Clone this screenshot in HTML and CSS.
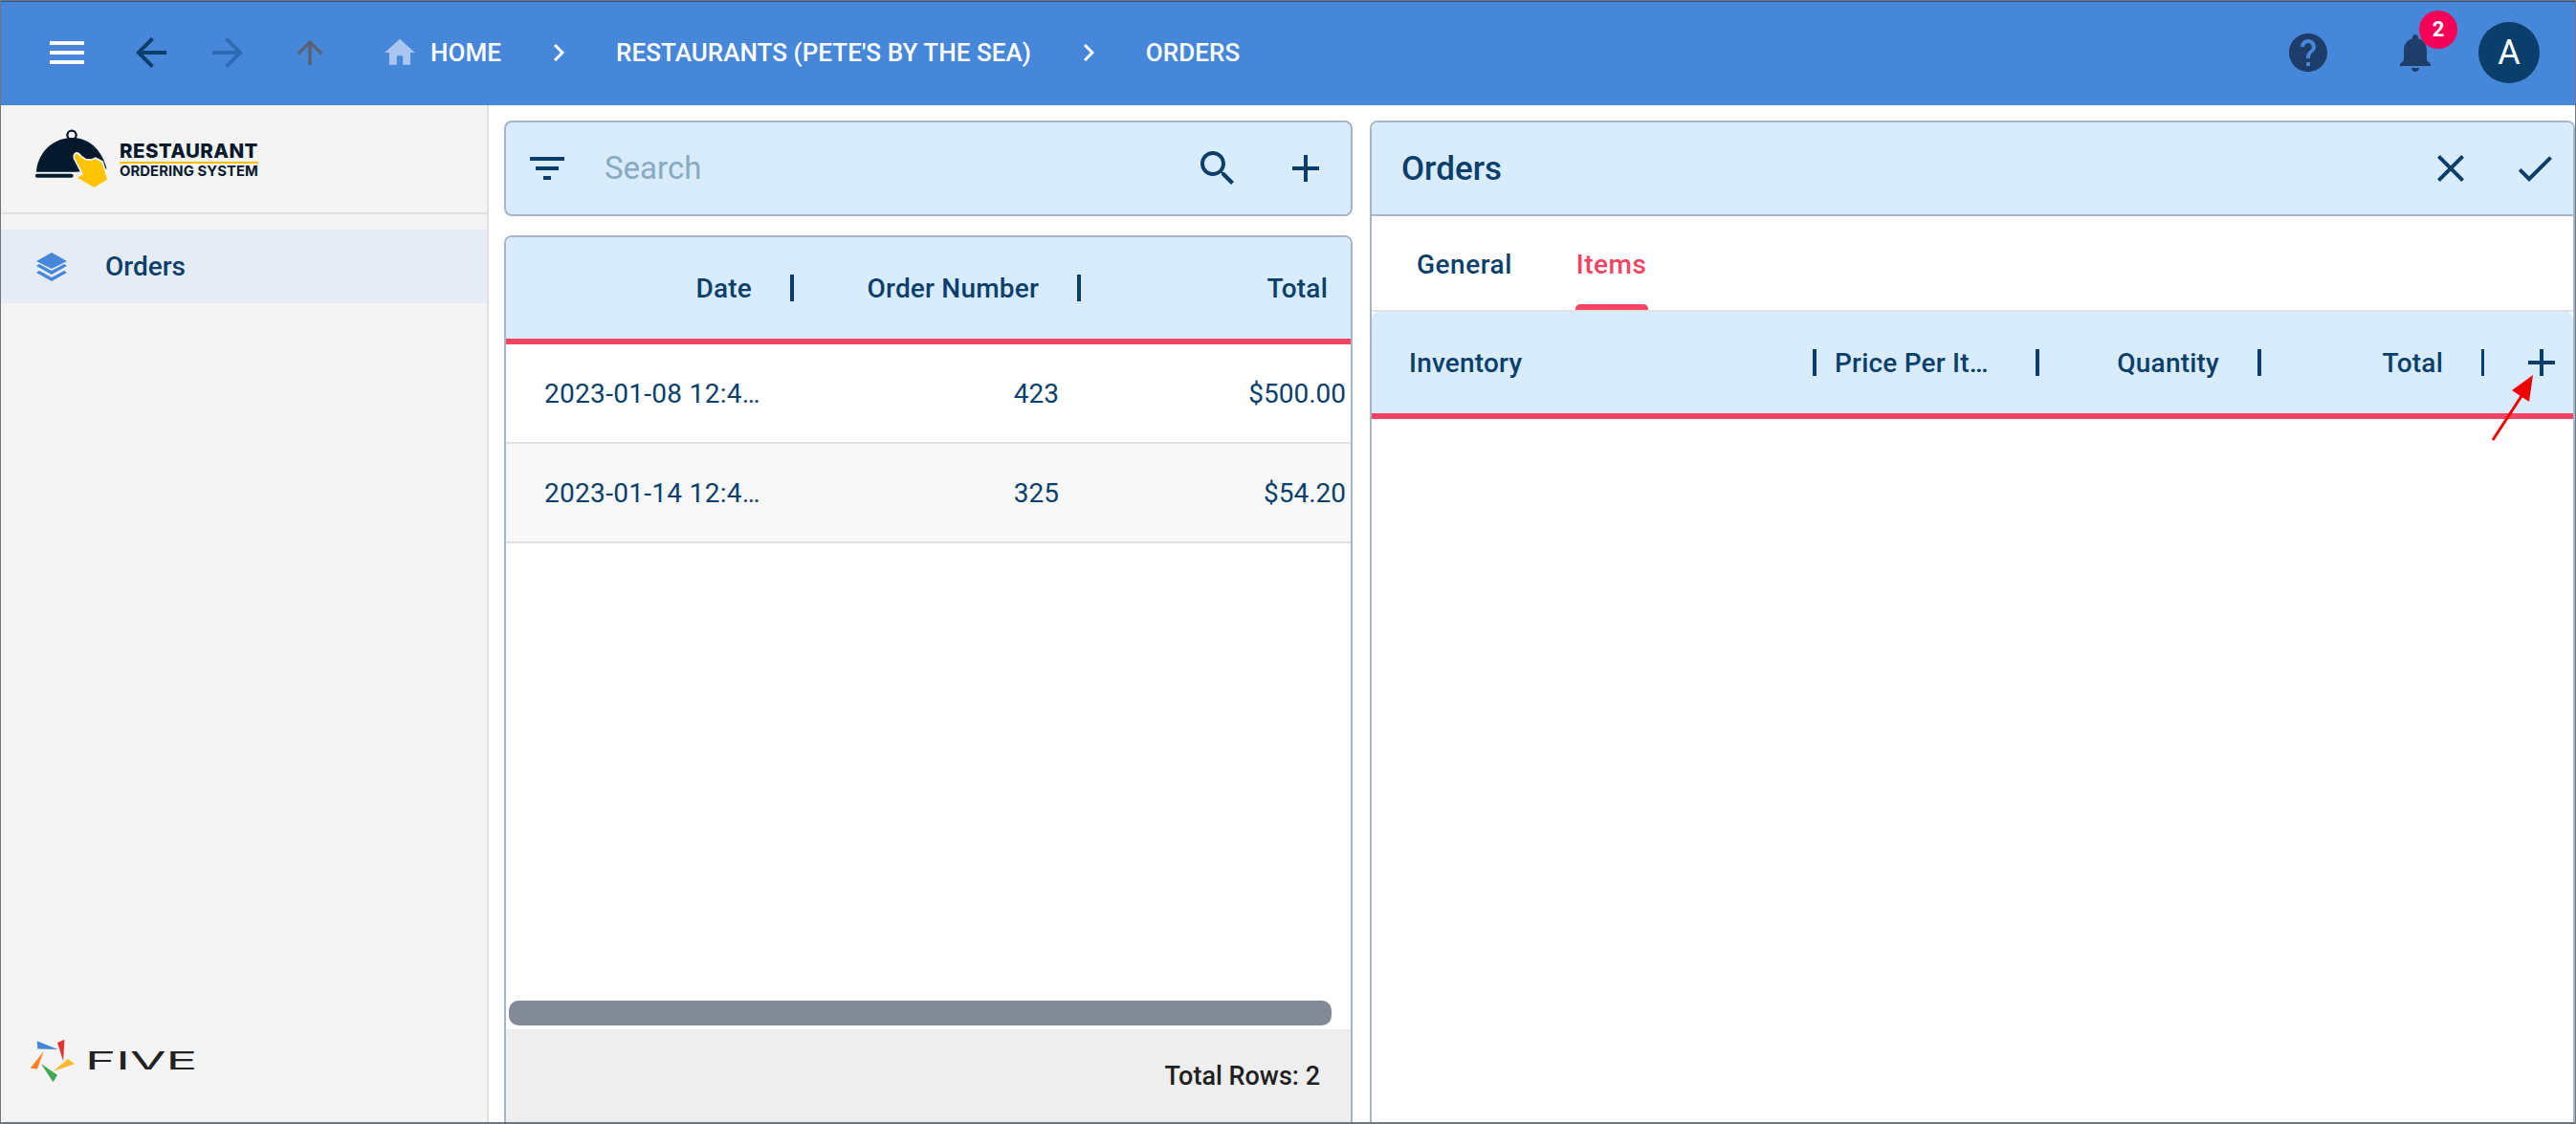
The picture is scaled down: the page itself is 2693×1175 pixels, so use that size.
FILE: index.html
```html
<!DOCTYPE html>
<html lang="en">
<head>
    <meta charset="UTF-8">
    <title>Restaurant Ordering System - Orders</title>
    <link rel="stylesheet" href="styles.css">
</head>
<body>
<div class="frame">
    <!-- Top bar -->
    <header class="topbar">
        <svg class="icon icon-menu" viewBox="0 0 24 24"><path d="M3 18h18v-2H3v2zm0-5h18v-2H3v2zm0-7v2h18V6H3z"/></svg>
        <svg class="icon icon-back" viewBox="0 0 24 24"><path d="M20 11H7.83l5.59-5.59L12 4l-8 8 8 8 1.41-1.41L7.83 13H20v-2z"/></svg>
        <svg class="icon icon-forward" viewBox="0 0 24 24"><path d="M12 4l-1.41 1.41L16.17 11H4v2h12.17l-5.58 5.59L12 20l8-8z"/></svg>
        <svg class="icon icon-up" viewBox="0 0 24 24"><path d="M4 12l1.41 1.41L11 7.83V20h2V7.83l5.58 5.59L20 12l-8-8-8 8z"/></svg>
        <svg class="icon-home" viewBox="0 0 24 24"><path d="M10 20v-6h4v6h5v-8h3L12 3 2 12h3v8z"/></svg>
        <span class="crumb crumb-home">HOME</span>
        <svg class="crumb-sep sep-first" viewBox="0 0 12 18"><polyline points="2,1 10,9 2,17"/></svg>
        <span class="crumb">RESTAURANTS (PETE'S BY THE SEA)</span>
        <svg class="crumb-sep" viewBox="0 0 12 18"><polyline points="2,1 10,9 2,17"/></svg>
        <span class="crumb">ORDERS</span>

        <div class="topbar-right">
            <svg class="icon icon-help" viewBox="0 0 24 24"><path d="M12 2C6.48 2 2 6.48 2 12s4.48 10 10 10 10-4.48 10-10S17.52 2 12 2zm1 17h-2v-2h2v2zm2.07-7.75l-.9.92C13.45 12.9 13 13.5 13 15h-2v-.5c0-1.1.45-2.1 1.17-2.83l1.24-1.26c.37-.36.59-.86.59-1.41 0-1.1-.9-2-2-2s-2 .9-2 2H8c0-2.21 1.79-4 4-4s4 1.79 4 4c0 .88-.36 1.68-.93 2.25z"/></svg>
            <div class="bell">
                <svg class="icon icon-help" viewBox="0 0 24 24"><path d="M12 22c1.1 0 2-.9 2-2h-4c0 1.1.89 2 2 2zm6-6v-5c0-3.07-1.64-5.64-4.5-6.32V4c0-.83-.67-1.5-1.5-1.5s-1.5.67-1.5 1.5v.68C7.63 5.36 6 7.92 6 11v5l-2 2v1h16v-1l-2-2z"/></svg>
                <span class="badge">2</span>
            </div>
            <div class="avatar">A</div>
        </div>
    </header>

    <div class="main">
        <!-- Sidebar -->
        <aside class="sidebar">
            <div class="brand">
                <svg class="brand-mark" viewBox="105 45 240 190">
                    <circle class="cloche-knob" cx="225" cy="64" r="14"/>
                    <path class="cloche" d="M113 180C118 115 170 72 225 72C280 72 320 110 335 170L240 180Z"/>
                    <rect class="cloche" x="110" y="186" width="120" height="12" rx="6"/>
                    <path class="hand" d="M240 120C232 122 230 130 233 138L258 186L238 198L296 232L340 205L322 148L300 136L285 142L268 140L254 130C250 124 246 120 240 120Z"/>
                </svg>
                <div class="brand-text">
                    <div class="brand-name">RESTAURANT</div>
                    <div class="brand-sub">ORDERING SYSTEM</div>
                </div>
            </div>
            <div class="nav-item">
                <svg class="nav-icon" viewBox="0 0 32 30"><path d="M16 0L32 9L16 17L0 9Z"/><path d="M0 14L3 12L16 19L29 12L32 14L16 23Z"/><path d="M0 21L3 19L16 26L29 19L32 21L16 30Z"/></svg>
                <span>Orders</span>
            </div>
            <div class="powered">
                <svg class="five-mark" viewBox="85 130 155 148">
                    <polygon fill="#4687d9" points="112,140 180,167 114,165"/>
                    <polygon fill="#e5322f" points="201,135 178,145 197,205"/>
                    <polygon fill="#fdb92c" points="234,214 212,198 165,237"/>
                    <polygon fill="#43a853" points="125,213 178,250 164,273"/>
                    <polygon fill="#fb8124" points="134,172 90,228 113,230"/>
                </svg>
                <span class="five-name">FIVE</span>
            </div>
        </aside>

        <!-- List column -->
        <section class="list-col">
            <div class="panel search-bar">
                <svg class="icon icon-dark" viewBox="0 0 24 24"><path d="M10 18h4v-2h-4v2zM3 6v2h18V6H3zm3 7h12v-2H6v2z"/></svg>
                <span class="search-text">Search</span>
                <svg class="icon icon-dark icon-search" viewBox="0 0 24 24"><path d="M15.5 14h-.79l-.28-.27C15.41 12.59 16 11.11 16 9.5 16 5.91 13.09 3 9.5 3S3 5.91 3 9.5 5.91 16 9.5 16c1.61 0 3.09-.59 4.23-1.57l.27.28v.79l5 4.99L20.49 19l-4.99-5zm-6 0C7.01 14 5 11.99 5 9.5S7.01 5 9.5 5 14 7.01 14 9.5 11.99 14 9.5 14z"/></svg>
                <svg class="icon icon-dark icon-add" viewBox="0 0 24 24"><path d="M19 13h-6v6h-2v-6H5v-2h6V5h2v6h6v2z"/></svg>
            </div>
            <div class="panel table-panel">
                <div class="head-row orders-head">
                    <div class="head-cell"><span>Date</span><i class="divider"></i></div>
                    <div class="head-cell"><span>Order Number</span><i class="divider"></i></div>
                    <div class="head-cell last-cell"><span>Total</span></div>
                </div>
                <div class="data-row">
                    <div class="cell-date">2023-01-08 12:4…</div>
                    <div class="cell-num">423</div>
                    <div class="cell-total">$500.00</div>
                </div>
                <div class="data-row alt">
                    <div class="cell-date">2023-01-14 12:4…</div>
                    <div class="cell-num">325</div>
                    <div class="cell-total">$54.20</div>
                </div>
                <div class="spacer"></div>
                <div class="scroll-thumb"></div>
                <div class="table-foot">Total Rows: 2</div>
            </div>
        </section>

        <!-- Detail column -->
        <section class="panel detail">
            <div class="detail-head">
                <span class="detail-title">Orders</span>
                <svg class="icon icon-dark icon-close" viewBox="0 0 24 24"><path d="M19 6.41L17.59 5 12 10.59 6.41 5 5 6.41 10.59 12 5 17.59 6.41 19 12 13.41 17.59 19 19 17.59 13.41 12z"/></svg>
                <svg class="icon icon-dark icon-check" viewBox="0 0 24 24"><path d="M9 16.17L4.83 12l-1.42 1.41L9 19 21 7l-1.41-1.41z"/></svg>
            </div>
            <div class="tabs">
                <span class="tab">General</span>
                <span class="tab tab-active">Items</span>
            </div>
            <div class="head-row items-head">
                <div class="head-cell cell-start"><span>Inventory</span><i class="divider"></i></div>
                <div class="head-cell cell-start"><span>Price Per It…</span><i class="divider"></i></div>
                <div class="head-cell"><span>Quantity</span><i class="divider"></i></div>
                <div class="head-cell"><span>Total</span><i class="divider divider-thin"></i></div>
                <svg class="icon icon-dark items-add" viewBox="0 0 24 24"><path d="M19 13h-6v6h-2v-6H5v-2h6V5h2v6h6v2z"/></svg>
            </div>
        </section>
    </div>

    <!-- Annotation arrow over the add button -->
    <svg class="callout" viewBox="0 0 50 72"><line x1="4" y1="70" x2="38" y2="18"/><polygon points="46,2 24,18 42,30"/></svg>
</div>
</body>
</html>
```

FILE: styles.css
```css
* {
    box-sizing: border-box;
}
body {
    margin: 0;
    font-family: Roboto, "Liberation Sans", sans-serif;
    color: #0b3f6b;
    background: #fff;
}
.frame {
    position: relative;
    height: 100vh;
    display: flex;
    flex-direction: column;
    border: 1px solid #6f7680;
    border-bottom-width: 2px;
    overflow: hidden;
}
.icon {
    width: 48px;
    height: 48px;
    flex: none;
    fill: #0b3f6b;
}

/* Top bar */
.topbar {
    height: 109px;
    flex: none;
    display: flex;
    align-items: center;
    padding: 0 37px 3px 45px;
    background: #4687d9;
    border-top: 1px solid #2e5488;
}
.icon-menu {
    fill: #fff;
}
.icon-back {
    margin-left: 40px;
}
.icon-forward {
    margin-left: 32px;
    fill: #2b6cb5;
}
.icon-up {
    width: 40px;
    height: 40px;
    margin-left: 42px;
    fill: #5a6070;
}
.icon-home {
    width: 38px;
    height: 38px;
    margin-left: 55px;
    fill: #a8c6ef;
}
.crumb {
    font-size: 26px;
    font-weight: 500;
    letter-spacing: 0.05px;
    color: #fff;
    white-space: nowrap;
}
.crumb-home {
    margin-left: 13px;
}
.crumb-sep {
    width: 12px;
    height: 18px;
    margin: 0 54px;
    fill: none;
    stroke: #fff;
    stroke-width: 3;
}
.topbar-right {
    margin-left: auto;
    display: flex;
    align-items: center;
}
.icon-help {
    fill: #1f3d6b;
}
.bell {
    position: relative;
    width: 48px;
    height: 48px;
    margin-left: 64px;
}
.badge {
    position: absolute;
    top: -20px;
    left: 28px;
    width: 40px;
    height: 40px;
    border-radius: 50%;
    background: #f50057;
    color: #fff;
    font-size: 22px;
    font-weight: 700;
    display: flex;
    align-items: center;
    justify-content: center;
}
.avatar {
    width: 64px;
    height: 64px;
    margin-left: 42px;
    border-radius: 50%;
    background: #0b3f6b;
    color: #fff;
    font-size: 36px;
    display: flex;
    align-items: center;
    justify-content: center;
}

.main {
    flex: 1;
    min-height: 0;
    display: flex;
}

/* Sidebar */
.sidebar {
    width: 510px;
    flex: none;
    display: flex;
    flex-direction: column;
    background: #f4f4f4;
    border-right: 2px solid #e0e0e0;
}
.brand {
    height: 114px;
    flex: none;
    display: flex;
    align-items: center;
    padding-left: 34px;
    border-bottom: 2px solid #e0e0e0;
}
.brand-mark {
    width: 80px;
    height: 63px;
    flex: none;
}
.cloche {
    fill: #041a2c;
}
.cloche-knob {
    fill: none;
    stroke: #041a2c;
    stroke-width: 7;
}
.hand {
    fill: #ffc400;
    stroke: #f4f4f4;
    stroke-width: 5;
}
.brand-text {
    margin: 3px 0 0 10px;
    color: #041a2c;
    font-family: Inter, "Liberation Sans", sans-serif;
    white-space: nowrap;
}
.brand-name {
    font-size: 20.5px;
    font-weight: 800;
    line-height: 19px;
    letter-spacing: 0.4px;
    padding-bottom: 2px;
    border-bottom: 2px solid #ffc400;
}
.brand-sub {
    font-size: 14.8px;
    font-weight: 700;
    line-height: 16px;
    letter-spacing: 0.1px;
}
.nav-item {
    height: 77px;
    margin-top: 16px;
    display: flex;
    align-items: center;
    padding-left: 37px;
    background: #e6ecf4;
    font-size: 28px;
    font-weight: 500;
}
.nav-icon {
    width: 32px;
    height: 30px;
    margin-right: 40px;
    fill: #4687d9;
}
.powered {
    margin-top: auto;
    display: flex;
    align-items: center;
    padding: 0 0 40px 29px;
}
.five-mark {
    width: 50px;
    height: 48px;
    flex: none;
}
.five-name {
    margin-left: 9px;
    font-family: Inter, "Liberation Sans", sans-serif;
    font-size: 26px;
    font-weight: 400;
    line-height: 26px;
    color: #222;
    transform: scaleX(2.1);
    transform-origin: left center;
}

/* Panels */
.panel {
    border: 2px solid #a6b5c8;
    border-radius: 8px;
    overflow: hidden;
}
.list-col {
    width: 887px;
    flex: none;
    margin: 16px 0 0 16px;
    display: flex;
    flex-direction: column;
    gap: 20px;
}
.search-bar {
    height: 100px;
    flex: none;
    display: flex;
    align-items: center;
    padding-left: 19px;
    background: #d8ecfd;
}
.search-text {
    margin: 0 0 2px 36px;
    font-size: 33px;
    color: #8aa9c2;
}
.icon-search {
    margin-left: auto;
}
.icon-add {
    margin: 0 23px 0 44px;
}
.table-panel {
    flex: 1;
    min-height: 0;
    display: flex;
    flex-direction: column;
    border-bottom: 0;
    border-radius: 8px 8px 0 0;
}
.head-row {
    flex: none;
    display: grid;
    align-items: center;
    height: 112px;
    background: #d8ecfd;
    border-bottom: 6px solid #f24463;
    font-size: 28px;
    font-weight: 500;
}
.orders-head {
    grid-template-columns: 301px 300px 1fr;
}
.head-cell {
    display: flex;
    align-items: center;
    justify-content: flex-end;
    white-space: nowrap;
    letter-spacing: 0.2px;
}
.divider {
    width: 4px;
    height: 28px;
    margin-left: 40px;
    background: #0b3f6b;
}
.divider-thin {
    width: 3px;
}
.last-cell {
    padding-right: 24px;
}
.data-row {
    flex: none;
    display: grid;
    grid-template-columns: 301px 300px 1fr;
    align-items: center;
    height: 104px;
    border-bottom: 2px solid #e0e0e0;
    font-size: 28px;
    white-space: nowrap;
}
.alt {
    background: #f8f8f8;
}
.cell-date {
    padding-left: 40px;
    letter-spacing: 0.3px;
}
.cell-num {
    text-align: right;
    padding-right: 23px;
}
.cell-total {
    text-align: right;
    padding-right: 5px;
}
.spacer {
    flex: 1;
}
.scroll-thumb {
    height: 26px;
    flex: none;
    margin: 0 20px 4px 3px;
    border-radius: 10px;
    background: #828a98;
}
.table-foot {
    height: 97px;
    flex: none;
    display: flex;
    align-items: center;
    justify-content: flex-end;
    padding-right: 32px;
    background: #eee;
    color: #1f1f1f;
    font-size: 27px;
    font-weight: 500;
}

/* Detail */
.detail {
    flex: 1;
    min-width: 0;
    margin: 16px 0 0 18px;
    border-bottom: 0;
    border-radius: 8px 8px 0 0;
    display: flex;
    flex-direction: column;
}
.detail-head {
    height: 98px;
    flex: none;
    display: flex;
    align-items: center;
    padding-left: 31px;
    background: #d8ecfd;
    border-bottom: 2px solid #a6b5c8;
}
.detail-title {
    font-size: 35px;
    font-weight: 500;
}
.icon-close {
    margin-left: auto;
}
.icon-check {
    margin: 0 16px 0 40px;
}
.tabs {
    height: 100px;
    flex: none;
    display: flex;
    padding-left: 47px;
    border-bottom: 2px solid #e0e0e0;
    font-size: 28px;
    font-weight: 500;
    letter-spacing: 0.5px;
}
.tab {
    padding-top: 34px;
    margin-right: 67px;
}
.tab-active {
    position: relative;
    color: #f24463;
}
.tab-active::after {
    content: "";
    position: absolute;
    left: -1px;
    right: -2px;
    bottom: 0;
    height: 6px;
    border-radius: 5px 5px 0 0;
    background: #f24463;
}
.items-head {
    grid-template-columns: 465px 233px 232px 233px 1fr;
    border-radius: 8px 8px 0 0;
}
.cell-start {
    justify-content: space-between;
    padding-left: 39px;
}
.items-head .cell-start + .cell-start {
    padding-left: 19px;
}
.items-head .divider {
    margin-left: 40px;
}
.items-add {
    justify-self: end;
    margin-right: 9px;
}

/* Annotation */
.callout {
    position: absolute;
    left: 2601px;
    top: 389px;
    width: 50px;
    height: 72px;
}
.callout line {
    stroke: #f00000;
    stroke-width: 3;
}
.callout polygon {
    fill: #f00000;
}
```
